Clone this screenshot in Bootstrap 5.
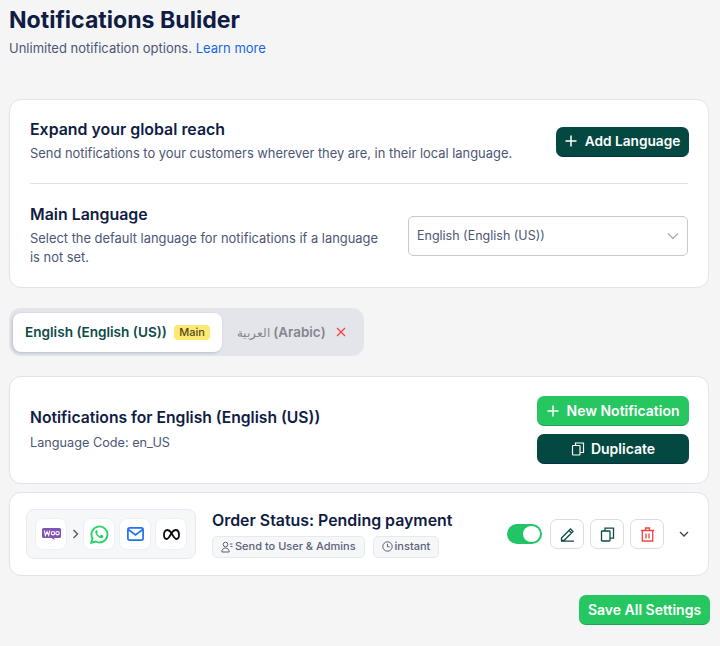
<!DOCTYPE html>
<html lang="en">
<head>
    <meta charset="UTF-8">
    <meta name="viewport" content="width=device-width, initial-scale=1.0">
    <title>Notifications Builder</title>
    <link href="https://cdn.jsdelivr.net/npm/bootstrap@5.3.0/dist/css/bootstrap.min.css" rel="stylesheet">
    <style>
        body {
            background-color: #f5f5f6;
            font-family: "Inter", "Noto Sans", sans-serif;
            color: #0f1c44;
            padding: 0 11px 0 9px;
        }
        .page-title {
            font-size: 23.1px;
            font-weight: 700;
            line-height: 28px;
            margin: 6px 0 0;
            color: #0f1c44;
        }
        .page-sub {
            font-size: 13px;
            line-height: 18px;
            margin: 5px 0 42px;
            color: #4d5675;
        }
        .page-sub a { color: #1668dc; text-decoration: none; }
        .panel {
            background: #fff;
            border: 1px solid #e2e3ec;
            border-radius: 12px;
        }
        .panel-lang { padding: 20px; height: 189px; margin-bottom: 20px; }
        .panel-head { height: 108px; padding: 0 19px 0 20px; margin: 20px 0 8px; }
        .panel-row { height: 84px; padding: 0 16px; margin-bottom: 19px; }
        .sec-title { font-size: 15.9px; font-weight: 600; line-height: 20px; margin: 0 0 4px; color: #0f1c44; }
        .sec-text { font-size: 12.9px; line-height: 19px; margin: 0; color: #4d5675; }
        .head-title { font-size: 15.7px; }
        .code-line { font-size: 12.7px; margin-top: 5px; }
        .lang-rule { border-top: 1px solid #dfe0e8; margin: 20px 0 21px; }
        .btn-deep, .btn-leaf {
            font-size: 14px;
            font-weight: 600;
            border-radius: 7px;
            color: #fff;
            height: 30px;
            padding: 0;
            border: 0;
        }
        .btn-deep { background: #044842; border-bottom: 1px solid #04304a; }
        .btn-leaf { background: #26c761; border-bottom: 1px solid #1fa552; }
        .btn-deep:hover, .btn-leaf:hover { color: #fff; }
        .btn-add { width: 133px; margin-right: -1px; font-size: 13.7px; }
        .btn-wide { width: 152px; }
        .btn-save { width: 131px; }
        .save-wrap { margin-right: -1px; }
        .dup-gap { gap: 6px; }
        .lang-select {
            width: 280px;
            height: 40px;
            font-size: 12.5px;
            color: #4d5675;
            border: 1px solid #c9cad0;
            border-radius: 5px;
            padding: 0 8px;
            flex: none;
        }
        .tab-strip {
            width: 355px;
            height: 48px;
            background: #e4e5ea;
            border-radius: 12px;
            padding: 5px 4px;
        }
        .tab-on {
            width: 209px;
            height: 39px;
            background: #fff;
            border-radius: 8px;
            box-shadow: -1px 1px 3px rgba(15, 28, 68, .2);
            padding: 0 12px;
            font-size: 13.6px;
            font-weight: 600;
            color: #0c4c48;
            white-space: nowrap;
        }
        .main-tag {
            background: #ffe872;
            color: #4f4a18;
            font-size: 11px;
            font-weight: 500;
            border-radius: 4px;
            padding: 0 5px;
            line-height: 15px;
        }
        .tab-off {
            font-size: 13.4px;
            font-weight: 600;
            color: #85868f;
            padding-left: 15px;
            white-space: nowrap;
        }
        .arabic-name { font-size: 11.5px; font-weight: 400; }
        .tab-x { margin-left: 10px; }
        .flow-box {
            width: 170px;
            height: 50px;
            background: #f6f7f9;
            border: 1px solid #e8e9ee;
            border-radius: 8px;
            padding: 0 8px;
            flex: none;
        }
        .flow-icon {
            width: 32px;
            height: 32px;
            background: #fff;
            border: 1px solid #eef0f3;
            border-radius: 8px;
            flex: none;
        }
        .flow-gap { margin-left: 4px; }
        .flow-arrow { width: 16px; flex: none; }
        .rule-title { font-size: 15.9px; font-weight: 600; line-height: 20px; color: #0f1c44; white-space: nowrap; }
        .meta-row { margin-top: 5px; }
        .meta-pill {
            height: 22px;
            background: #f6f7f9;
            border: 1px solid #e8e9ee;
            border-radius: 5px;
            font-size: 11px;
            font-weight: 500;
            color: #5b6178;
            padding: 0 8px;
            white-space: nowrap;
            gap: 2px;
        }
        .switch-on {
            width: 35px;
            height: 20px;
            background: #22c566;
            border-radius: 10px;
            padding: 2px;
            flex: none;
            margin-right: 2px;
        }
        .switch-on span { width: 17px; height: 16px; background: #fff; border-radius: 50%; }
        .act-row { margin-right: 3px; }
        .act-btn {
            width: 34px;
            height: 30px;
            background: #fff;
            border: 1px solid #d9dce3;
            border-radius: 7px;
            flex: none;
            margin-left: 2px;
        }
        .row-caret { margin-left: 11px; }
    </style>
</head>
<body>
    <h1 class="page-title">Notifications Bulider</h1>
    <p class="page-sub">Unlimited notification options. <a href="#">Learn more</a></p>

    <!-- Languages -->
    <div class="panel panel-lang">
        <div class="d-flex justify-content-between align-items-center">
            <div>
                <h2 class="sec-title">Expand your global reach</h2>
                <p class="sec-text">Send notifications to your customers wherever they are, in their local language.</p>
            </div>
            <button class="btn btn-deep btn-add d-flex align-items-center justify-content-center gap-2 flex-shrink-0">
                <svg width="12" height="12" viewBox="0 0 12 12" fill="none" stroke="#fff" stroke-width="1.5"><path d="M6 .5v11M.5 6h11"/></svg>
                Add Language
            </button>
        </div>
        <div class="lang-rule"></div>
        <div class="d-flex justify-content-between align-items-center">
            <div class="flex-grow-1 pe-4">
                <h2 class="sec-title">Main Language</h2>
                <p class="sec-text">Select the default language for notifications if a language is not set.</p>
            </div>
            <div class="lang-select d-flex align-items-center justify-content-between bg-white">
                <span>English (English (US))</span>
                <svg width="12" height="8" viewBox="0 0 12 8" fill="none" stroke="#a9abb3" stroke-width="1.3"><path d="M1 1.5l5 5 5-5"/></svg>
            </div>
        </div>
    </div>

    <!-- Tabs -->
    <div class="tab-strip d-flex align-items-center">
        <div class="tab-on d-flex align-items-center justify-content-between">
            <span>English (English (US))</span>
            <span class="main-tag">Main</span>
        </div>
        <div class="tab-off d-flex align-items-center">
            <span><span class="arabic-name">العربية</span> (Arabic)</span>
            <svg class="tab-x" width="10" height="10" viewBox="0 0 10 10" fill="none" stroke="#ef4444" stroke-width="1.3"><path d="M1 1l8 8M9 1l-8 8"/></svg>
        </div>
    </div>

    <!-- Notifications header -->
    <div class="panel panel-head d-flex justify-content-between align-items-center">
        <div>
            <h2 class="sec-title head-title">Notifications for English (English (US))</h2>
            <p class="sec-text code-line">Language Code: en_US</p>
        </div>
        <div class="d-flex flex-column gap-2">
            <button class="btn btn-leaf btn-wide d-flex align-items-center justify-content-center gap-2">
                <svg width="12" height="12" viewBox="0 0 12 12" fill="none" stroke="#fff" stroke-width="1.5"><path d="M6 .5v11M.5 6h11"/></svg>
                New Notification
            </button>
            <button class="btn btn-deep btn-wide dup-gap d-flex align-items-center justify-content-center">
                <svg width="14" height="14" viewBox="0 0 14 14" fill="none" stroke="#fff" stroke-width="1.2"><rect x="1.5" y="3.5" width="7.5" height="9.5" rx=".8"/><path d="M4.5 3.5V1h8v9.5H9"/></svg>
                Duplicate
            </button>
        </div>
    </div>

    <!-- Notification row -->
    <div class="panel panel-row d-flex align-items-center">
        <div class="flow-box d-flex align-items-center">
            <div class="flow-icon d-flex align-items-center justify-content-center">
                <svg width="19" height="12" viewBox="0 0 19 12">
                    <path fill="#7f54b3" d="M1.500 0h16A1.500 1.500 0 0 1 19 1.500v7A1.500 1.500 0 0 1 17.500 10H12l.7 2-3.100-2H1.500A1.500 1.500 0 0 1 0 8.500v-7A1.500 1.500 0 0 1 1.500 0z"/>
                    <path fill="none" stroke="#fff" stroke-width="1.100" d="M2.300 2.500l1.100 5 1.700-3.800 1.600 3.800 1-5"/>
                    <circle cx="11" cy="5.200" r="1.700" fill="none" stroke="#fff" stroke-width="1.100"/>
                    <circle cx="15.500" cy="5.200" r="1.700" fill="none" stroke="#fff" stroke-width="1.100"/>
                </svg>
            </div>
            <div class="flow-arrow d-flex align-items-center justify-content-center">
                <svg width="7" height="10" viewBox="0 0 7 10" fill="none" stroke="#5b6178" stroke-width="1.500"><path d="M1.500 1l4 4-4 4"/></svg>
            </div>
            <div class="flow-icon d-flex align-items-center justify-content-center">
                <svg width="19" height="19" viewBox="0 0 19 19" fill="none">
                    <path stroke="#25d366" stroke-width="1.900" d="M1.300 17.700l1.200-4.300A8 8 0 1 1 5.700 16.500z"/>
                    <path fill="#25d366" d="M6.800 5.200c-.3 0-.8.200-1.100.700-.7 1-.5 2.500.9 4.300 1.500 1.900 3.300 2.900 4.700 2.900 1 0 1.800-.7 2-1.400.1-.4.100-.8 0-.9l-1.900-1c-.2-.1-.4 0-.5.100l-.7.900c-.1.100-.3.200-.5.100-1.100-.5-2-1.300-2.600-2.400-.1-.2 0-.3.100-.5l.5-.6c.1-.2.100-.3.100-.5l-.8-1.900c-.1-.3-.2-.4-.4-.4z"/>
                </svg>
            </div>
            <div class="flow-icon flow-gap d-flex align-items-center justify-content-center">
                <svg width="17" height="14" viewBox="0 0 17 14" fill="none" stroke="#2172f0" stroke-width="1.700"><rect x=".9" y=".9" width="15.200" height="12.200" rx="1.800"/><path d="M1.200 2.500l7.300 5.500 7.300-5.500"/></svg>
            </div>
            <div class="flow-icon flow-gap d-flex align-items-center justify-content-center">
                <svg width="17" height="11" viewBox="0 0 17 11" fill="none" stroke="#0b0b0f" stroke-width="1.800"><path d="M8.500 4C7 1.700 5.700 1 4.300 1 2.300 1 1 3 1 5.800 1 8.500 2 10 3.600 10c1.500 0 2.500-1.300 4.900-6 1.500-2.300 2.800-3 4.200-3 2 0 3.300 2 3.300 4.800 0 2.700-1 4.200-2.600 4.200-1.500 0-2.500-1.300-4.900-6z"/></svg>
            </div>
        </div>
        <div class="ms-3 flex-grow-1">
            <div class="rule-title">Order Status: Pending payment</div>
            <div class="meta-row d-flex gap-2">
                <span class="meta-pill d-flex align-items-center">
                    <svg width="12" height="12" viewBox="0 0 12 12" fill="none" stroke="#5b6178" stroke-width="1"><circle cx="4.500" cy="3.500" r="2.300"/><path d="M.8 11c0-2.500 1.600-4 3.700-4s3.700 1.500 3.700 4zM9 3h2.500M9.500 5.500h2"/></svg>
                    Send to User &amp; Admins
                </span>
                <span class="meta-pill d-flex align-items-center">
                    <svg width="11" height="11" viewBox="0 0 11 11" fill="none" stroke="#5b6178" stroke-width="1"><circle cx="5.500" cy="5.500" r="4.700"/><path d="M5.500 2.800v3h2.200"/></svg>
                    instant
                </span>
            </div>
        </div>
        <div class="act-row d-flex align-items-center gap-1">
            <div class="switch-on d-flex justify-content-end"><span></span></div>
            <div class="act-btn d-flex align-items-center justify-content-center">
                <svg width="15" height="15" viewBox="0 0 15 15" fill="none" stroke="#0c4c48" stroke-width="1.300"><path d="M1.500 11L10.500 2l2.500 2.500-9 9H1.500zM9 3.500L11.500 6M1 14.200h13"/></svg>
            </div>
            <div class="act-btn d-flex align-items-center justify-content-center">
                <svg width="15" height="15" viewBox="0 0 15 15" fill="none" stroke="#0c4c48" stroke-width="1.300"><rect x="1.500" y="4" width="8.500" height="10" rx=".8"/><path d="M5 4V1.200h8.500v10H10"/></svg>
            </div>
            <div class="act-btn d-flex align-items-center justify-content-center">
                <svg width="15" height="15" viewBox="0 0 15 15" fill="none" stroke="#ef4444" stroke-width="1.300"><path d="M.8 3.500h13.400M5.500 3.500V1h4v2.500M2.300 3.500V14h10.400V3.500M6 6.500v5M9 6.500v5"/></svg>
            </div>
            <svg class="row-caret" width="10" height="6" viewBox="0 0 10 6" fill="none" stroke="#3c4256" stroke-width="1.300"><path d="M1 1l4 4 4-4"/></svg>
        </div>
    </div>

    <div class="save-wrap d-flex justify-content-end">
        <button class="btn btn-leaf btn-save">Save All Settings</button>
    </div>

    <script src="https://cdn.jsdelivr.net/npm/bootstrap@5.3.0/dist/js/bootstrap.bundle.min.js"></script>
</body>
</html>
